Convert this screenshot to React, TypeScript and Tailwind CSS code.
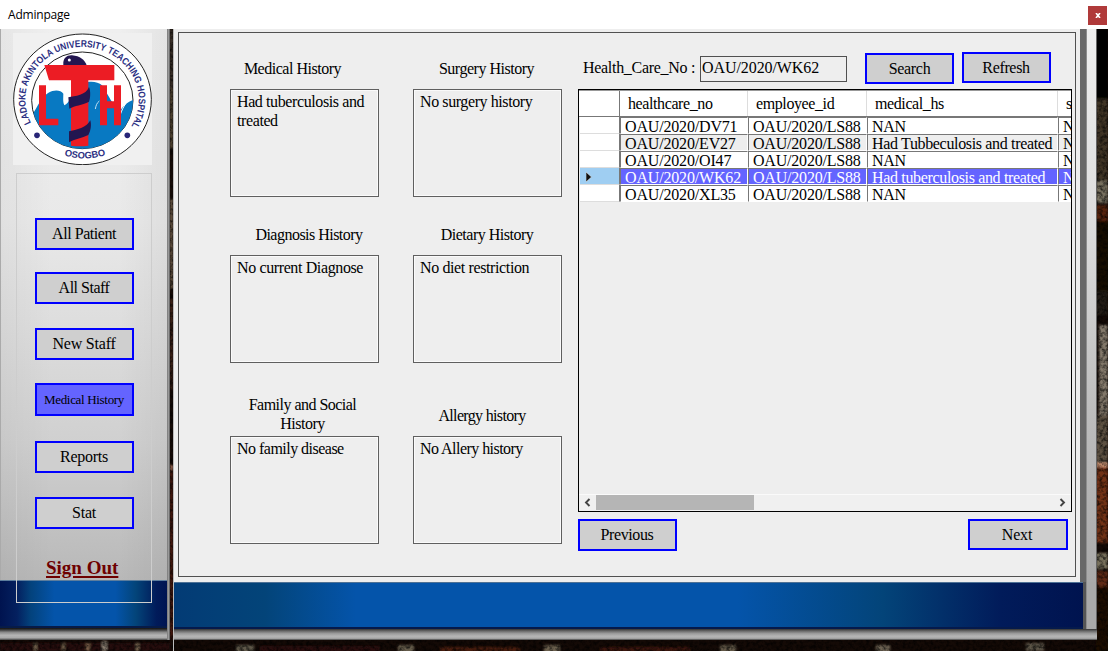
import React from "react";

const serif = "font-['Liberation_Serif',serif]";

function Bricks() {
  return (
    <svg className="absolute inset-0 h-full w-full" viewBox="0 0 1108 622" preserveAspectRatio="none" aria-hidden="true">
      <defs>
        <filter id="grain" x="0" y="0" width="100%" height="100%">
          <feTurbulence type="fractalNoise" baseFrequency="0.3" numOctaves="3" seed="7" result="n" />
          <feColorMatrix in="n" type="matrix" values="0 0 0 0 0  0 0 0 0 0  0 0 0 0 0  2.4 0 0 0 -0.9" />
          <feComposite in2="SourceGraphic" operator="in" />
        </filter>
        <filter id="soften" x="-5%" y="-5%" width="110%" height="110%">
          <feGaussianBlur stdDeviation="1.2" />
        </filter>
      </defs>
      <rect width="1108" height="622" fill="#140a06" />
      <g filter="url(#soften)">
        <rect x="1096" y="0" width="12" height="70" fill="#060302" />
        <rect x="1096" y="70" width="12" height="82" fill="#3f3425" />
        <rect x="1096" y="152" width="12" height="22" fill="#77705f" />
        <rect x="1096" y="176" width="12" height="16" fill="#54200f" />
        <rect x="1096" y="192" width="12" height="70" fill="#180804" />
        <rect x="1096" y="262" width="12" height="24" fill="#231b14" />
        <rect x="1099" y="296" width="9" height="90" fill="#82786a" />
        <rect x="1096" y="386" width="12" height="48" fill="#5d5142" />
        <rect x="1096" y="434" width="12" height="4" fill="#d29676" />
        <rect x="1096" y="438" width="12" height="76" fill="#713014" />
        <rect x="1096" y="524" width="12" height="16" fill="#77705c" />
        <rect x="1096" y="542" width="12" height="16" fill="#5e2a12" />
        <rect x="1096" y="558" width="12" height="64" fill="#1c0a05" />
        <rect x="170" y="0" width="3" height="60" fill="#3f382d" />
        <rect x="170" y="60" width="3" height="60" fill="#574b37" />
        <rect x="170" y="170" width="3" height="90" fill="#6b5a48" />
        <rect x="170" y="270" width="3" height="90" fill="#41281c" />
        <rect x="170" y="436" width="3" height="5" fill="#a4705a" />
        <rect x="170" y="441" width="3" height="170" fill="#4a1c0e" />
        <rect x="0" y="614" width="170" height="8" fill="#27100a" />
        <rect x="34" y="614" width="3" height="8" fill="#70604b" />
        <rect x="62" y="614" width="3" height="8" fill="#705f48" />
        <rect x="86" y="614" width="4" height="8" fill="#7c5f48" />
        <rect x="102" y="612" width="5" height="10" fill="#8b8072" />
        <rect x="136" y="614" width="3" height="8" fill="#806d56" />
        <rect x="260" y="617" width="120" height="6" fill="#2a0f08" />
        <rect x="236" y="616" width="18" height="8" fill="#5f584a" />
        <rect x="398" y="616" width="16" height="8" fill="#655c4c" />
        <rect x="440" y="618" width="80" height="5" fill="#4a1b0e" />
        <rect x="544" y="616" width="16" height="8" fill="#6b5f4e" />
        <rect x="600" y="618" width="90" height="5" fill="#3d170c" />
        <rect x="720" y="616" width="16" height="8" fill="#605644" />
        <rect x="876" y="616" width="14" height="8" fill="#6d6452" />
        <rect x="1026" y="614" width="18" height="8" fill="#5c5546" />
      </g>
      <rect width="1108" height="622" fill="#000" filter="url(#grain)" opacity="0.65" />
    </svg>
  );
}

function Logo() {
  return (
    <svg className="ml-[13px] h-[132px] w-[139px] shrink-0 bg-[#f0f0f0]" viewBox="39 98 417 396" preserveAspectRatio="none">
      <defs>
        <clipPath id="disc">
          <ellipse cx="247" cy="300" rx="152" ry="145" />
        </clipPath>
        <path id="topArc" d="M93 368 A170 159 0 1 1 378 399" />
        <path id="bottomArc" d="M180 461 A190 174 0 0 0 330 459" />
      </defs>
      <ellipse cx="247.500" cy="297" rx="206.500" ry="196" fill="#fff" stroke="#222" strokeWidth="3" />
      <ellipse cx="247" cy="300" rx="152" ry="145" fill="#fff" stroke="#222" strokeWidth="3" />
      <g clipPath="url(#disc)">
        <path
          d="M95 345 C110 325 112 312 128 296 C140 270 178 262 190 280 C190 292 188 305 193 315 C208 308 215 285 232 262 C250 240 290 240 306 255 C320 275 345 330 362 328 C375 312 388 300 405 298 L420 460 L80 460 Z"
          fill="#0879c2"
        />
        <path d="M298 302 C290 308 288 316 286 326" fill="none" stroke="#e9f5fb" strokeWidth="2.500" />
        <path d="M396 295 C378 300 364 330 358 352" fill="none" stroke="#fff" strokeWidth="3" />
      </g>
      <path d="M190 194 C188 174 200 164 216 165 C240 167 254 178 260 195 Z" fill="#231650" />
      <circle cx="208" cy="179" r="4.500" fill="#fff" />
      <path d="M133 194 H343 V240 H265 V436 Q240 440 213 436 V240 H147 Z" fill="#ec1c24" />
      <path d="M117 255 H138 V355 H175 V375 H117 Z" fill="#ec1c24" />
      <path d="M300 255 H321 V303 H342 V255 H363 V375 H342 V324 H321 V375 H300 Z" fill="#ec1c24" />
      <path d="M205 291 C225 287 258 285 267 260 C272 270 272 292 267 304 C245 315 225 315 208 325 Z" fill="#231650" />
      <path d="M207 393 C228 390 262 380 271 360 C275 375 272 392 265 404 C245 414 228 415 207 426 Z" fill="#231650" />
      <circle cx="111" cy="405" r="8.500" fill="#282577" />
      <circle cx="382" cy="405" r="8.500" fill="#282577" />
      <g fill="#2b2f82" fontFamily="Liberation Sans, sans-serif" fontWeight="700">
        <text fontSize="29">
          <textPath href="#topArc" textLength="672" lengthAdjust="spacingAndGlyphs">
            LADOKE AKINTOLA UNIVERSITY TEACHING HOSPITAL
          </textPath>
        </text>
        <text fontSize="28">
          <textPath href="#bottomArc" startOffset="50%" textAnchor="middle">
            OSOGBO
          </textPath>
        </text>
      </g>
    </svg>
  );
}

function Button({ className, children }: { className: string; children: React.ReactNode }) {
  return (
    <button
      className={`flex shrink-0 items-center justify-center whitespace-nowrap border-2 border-[#0000ff] leading-none ${className}`}
    >
      {children}
    </button>
  );
}

const navButton = "h-8 w-[99px] bg-[#cfcfcf] text-[16px] pr-px";

function Sidebar() {
  return (
    <aside className="relative flex h-[611px] w-[170px] shrink-0 flex-col">
      <div className="absolute inset-0 flex flex-col">
        <div className="h-[551px] border-l border-[#aaa] bg-[linear-gradient(90deg,rgba(0,0,0,0.04),transparent_30%,transparent_70%,rgba(0,0,0,0.05)),linear-gradient(180deg,#efefef,#e9e9e9_35%,#d0d0d0_75%,#b8b8b8)]" />
        <div className="h-[48px] border-b-2 border-t border-t-[#5c7d9d] border-b-[#071b48] bg-[linear-gradient(90deg,#00134f,#04205f_10%,#03427c_18%,#0454aa_32%,#0454aa_68%,#034479_80%,#011b5a_92%,#00134f)]" />
        <div className="h-[12px] bg-[linear-gradient(180deg,#111_0%,#444_18%,#888_35%,#b5b5b5_60%,#aaa_82%,#444_100%)]" />
      </div>
      <div className="absolute inset-y-0 right-0 w-[3px] bg-[linear-gradient(90deg,#777,#999,#555)]" />
      <div className="relative flex flex-col pt-1">
        <Logo />
        <div className="ml-4 mt-2 flex h-[430px] w-[136px] flex-col border border-[#cdcdcd] pl-[18px] pt-[44px]">
          <Button className={navButton}><span className="tracking-[-0.45px]">All Patient</span></Button>
          <Button className={`mt-[22px] ${navButton}`}><span className="tracking-[-0.5px]">All Staff</span></Button>
          <Button className={`mt-6 ${navButton}`}><span className="tracking-[-0.2px]">New Staff</span></Button>
          <Button className="mt-[23px] h-[33px] w-[99px] bg-[#6464ff] pr-px text-[13px]"><span className="tracking-[-0.32px]">Medical History</span></Button>
          <Button className={`mt-[25px] ${navButton}`}><span className="tracking-[-0.25px]">Reports</span></Button>
          <Button className={`mt-6 ${navButton}`}><span className="tracking-[-0.25px]">Stat</span></Button>
          <a className="ml-[11px] mt-[29px] w-[72px] whitespace-nowrap text-[19px] font-bold leading-[20px] text-[#6e0000] underline decoration-2 underline-offset-2">
            Sign Out
          </a>
        </div>
      </div>
    </aside>
  );
}

type Note = { title: React.ReactNode; text: string; labelClass: string; textClass: string };

const notes: Note[][] = [
  [
    { title: "Medical History", text: "Had tuberculosis and treated", labelClass: "pr-[24px] tracking-[-0.48px]", textClass: "tracking-[-0.4px]" },
    { title: "Surgery History", text: "No surgery history", labelClass: "pr-[2px] tracking-[-0.48px]", textClass: "tracking-[-0.41px]" },
  ],
  [
    { title: "Diagnosis History", text: "No current Diagnose", labelClass: "pl-[9px] tracking-[-0.52px]", textClass: "tracking-[-0.38px]" },
    { title: "Dietary History", text: "No diet restriction", labelClass: "pr-[1px] tracking-[-0.5px]", textClass: "tracking-[-0.38px]" },
  ],
  [
    { title: <>Family and Social<br />History</>, text: "No family disease", labelClass: "pr-[4px] tracking-[-0.52px]", textClass: "tracking-[-0.52px]" },
    { title: "Allergy history", text: "No Allery history", labelClass: "pr-[11px] pb-[8px] tracking-[-0.66px]", textClass: "tracking-[-0.54px]" },
  ],
];

const rowHeights = ["h-[56px]", "h-[58px]", "h-[73px]"];
const labelPads = ["pb-[11px]", "pb-[11px]", "pb-[3px]"];

function HistoryNotes() {
  return (
    <section className="w-[332px] shrink-0 text-[16px] leading-[19px]">
      {notes.map((row, i) => (
        <div key={i} className="flex justify-between">
          {row.map((note, j) => (
            <div key={j} className="w-[149px]">
              <div className={`flex items-end justify-center text-center ${rowHeights[i]} ${labelPads[i]}`}>
                <div className={`whitespace-nowrap ${note.labelClass}`}>{note.title}</div>
              </div>
              <div className={`h-[108px] border border-[#5f5f5f] pl-[6px] pr-1 pt-[2px] shadow-[inset_0_0_0_1px_#fafafa] ${note.textClass}`}>
                {note.text}
              </div>
            </div>
          ))}
        </div>
      ))}
    </section>
  );
}

const records = [
  ["OAU/2020/DV71", "OAU/2020/LS88", "NAN", "NAN"],
  ["OAU/2020/EV27", "OAU/2020/LS88", "Had Tubbeculosis and treated", "NAN"],
  ["OAU/2020/OI47", "OAU/2020/LS88", "NAN", "NAN"],
  ["OAU/2020/WK62", "OAU/2020/LS88", "Had tuberculosis and treated", "NAN"],
  ["OAU/2020/XL35", "OAU/2020/LS88", "NAN", "NAN"],
];
const cellWidths = ["w-[128px]", "w-[119px]", "w-[191px]", "w-[120px]"];
const cellTracking = ["tracking-[-0.17px]", "tracking-[-0.2px]", "tracking-[-0.34px]", "tracking-[0px]"];
const selected = 3;

function RecordGrid() {
  return (
    <div className="flex h-[423px] w-[494px] flex-col overflow-hidden border border-black">
      <div className="flex h-[27px] shrink-0 border-b border-t border-b-[#777] border-t-[#999] bg-white pl-px text-[16px] leading-[26px] tracking-[-0.4px]">
        <div className="w-10 shrink-0 border-r border-[#777]" />
        {["healthcare_no", "employee_id", "medical_hs", "surgery_hs"].map((name, i) => (
          <div key={name} className={`shrink-0 border-r border-[#ddd] pl-[8px] ${cellWidths[i]}`}>{name}</div>
        ))}
      </div>
      <div className="flex shrink-0 flex-col pl-px">
        {records.map((record, r) => (
          <div key={r} className="flex h-[17px]">
            <div
              className={`flex w-10 shrink-0 items-center border-b border-r border-r-[#777] border-b-[#ddd] pl-[6px] ${r === selected ? "bg-[#9fcef2]" : "bg-white"}`}
            >
              {r === selected && (
                <svg className="mt-px h-[10px] w-[6px]" viewBox="0 0 6 10"><path d="M0 0 L5.500 5 L0 10Z" fill="#111" stroke="#fff" strokeWidth=".5" /></svg>
              )}
            </div>
            {record.map((value, c) => (
              <div
                key={c}
                className={`shrink-0 whitespace-nowrap border border-b-white border-l-[#777] border-r-white border-t-[#777] pl-1 text-[16px] leading-[17px] ${cellWidths[c]} ${cellTracking[c]} ${
                  r === selected ? "bg-[#6464ff] text-white" : r === 1 ? "bg-[#eee]" : "bg-white"
                }`}
              >
                {value}
              </div>
            ))}
          </div>
        ))}
      </div>
      <div className="mt-auto flex h-[17px] shrink-0 items-start border-t border-[#fafafa] bg-[#f0f0f0]">
        <svg className="ml-[5px] mt-[3px] h-[9px] w-[7px]" viewBox="0 0 7 9"><path d="M5.500 1 L2 4.500 L5.500 8" fill="none" stroke="#444" strokeWidth="1.900" /></svg>
        <div className="ml-[5px] h-[15px] w-[158px] bg-[#b5b5b5]" />
        <svg className="ml-auto mr-[5px] mt-[3px] h-[9px] w-[7px]" viewBox="0 0 7 9"><path d="M1.500 1 L5 4.500 L1.500 8" fill="none" stroke="#444" strokeWidth="1.900" /></svg>
      </div>
    </div>
  );
}

function Records() {
  return (
    <section className="ml-4 w-[494px] pt-[19px]">
      <div className="flex h-[37px] items-start">
        <label className="ml-[5px] mt-[6px] w-[117px] whitespace-nowrap text-[16px] leading-[19px] tracking-[-0.3px]">Health_Care_No :</label>
        <div className="mt-1 h-[26px] w-[147px] whitespace-nowrap border border-[#505050] pl-[1px] text-[16px] leading-[22px] tracking-[-0.08px]">OAU/2020/WK62</div>
        <Button className="ml-[18px] mt-px h-[31px] w-[89px] bg-[#cfcfcf] pt-px text-[16px]"><span className="tracking-[-0.3px]">Search</span></Button>
        <Button className="ml-2 h-[31px] w-[89px] bg-[#cfcfcf] pr-px pt-px text-[16px]"><span className="tracking-[-0.35px]">Refresh</span></Button>
      </div>
      <RecordGrid />
      <div className="mt-[7px] flex items-start justify-between pr-1">
        <Button className={navButton}><span className="tracking-[-0.4px]">Previous</span></Button>
        <Button className="h-[31px] w-[100px] bg-[#cfcfcf] pr-0.5 text-[16px]"><span className="tracking-[-0.15px]">Next</span></Button>
      </div>
    </section>
  );
}

export default function App() {
  return (
    <div className={`flex h-[651px] w-[1108px] flex-col overflow-hidden bg-white text-black ${serif}`}>
      <header className="flex h-[29px] shrink-0 items-start justify-between pl-2 pr-px">
        <span className="mt-[6px] font-['Open_Sans',sans-serif] text-[12px] leading-[18px] tracking-[-0.2px]">Adminpage</span>
        <button className="mt-[6px] flex h-[19px] w-[19px] items-center justify-center bg-[#b03a3a]">
          <svg className="h-[5px] w-[6px]" viewBox="0 0 6 5"><path d="M1 0 L5 5 M5 0 L1 5" stroke="#fff" strokeWidth="1.600" /></svg>
        </button>
      </header>
      <div className="relative h-[622px]">
        <Bricks />
        <div className="relative flex items-start">
          <Sidebar />
          <div className="ml-[3px] h-[622px] w-px shrink-0 bg-[#bbb]" />
          <main className="flex shrink-0 flex-col">
            <div className="flex h-[553px]">
              <div className="w-[906px] bg-[#eee] pl-1 pt-[3px]">
                <div className="flex h-[545px] w-[898px] border border-[#505050] pl-[51px]">
                  <HistoryNotes />
                  <Records />
                </div>
              </div>
              <div className="w-[6px] bg-[#686868]" />
              <div className="w-[11px] border-x border-l-[#8d8d8d] border-r-[#666] bg-[linear-gradient(180deg,#eee,#ddd_35%,#bcbcbc_70%,#aaa)]" />
            </div>
            <div className="flex h-[47px]">
              <div className="w-[909px] border-b-2 border-t border-b-[#051a4c] border-t-[#4e7195] bg-[linear-gradient(90deg,#033b75,#034479_10%,#0454aa_20%,#0454aa_62%,#034479_78%,#011b5a_91%,#00134f)]" />
              <div className="w-[3px] bg-[#555]" />
              <div className="w-[11px] border-x border-l-[#8d8d8d] border-r-[#666] bg-[#a9a9a9]" />
            </div>
            <div className="h-[11px] bg-[linear-gradient(180deg,#333_0%,#686868_18%,#999_40%,#b5b5b5_65%,#aaa_85%,#444_100%)]" />
          </main>
        </div>
      </div>
    </div>
  );
}
